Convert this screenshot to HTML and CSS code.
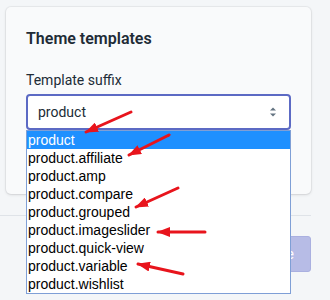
FILE: index.html
```html
<!DOCTYPE html>
<html lang="en">
<head>
  <meta charset="UTF-8">
  <meta name="viewport" content="width=device-width, initial-scale=1.0">
  <title>Theme templates</title>
  <link rel="stylesheet" href="styles.css">
</head>
<body>
  <div class="page">
    <section class="card">
      <h2 class="card-title">Theme templates</h2>
      <label class="field-label" for="suffix">Template suffix</label>
      <div class="select-wrap">
        <div class="select" id="suffix">
          <span>product</span>
          <svg class="select-arrows" width="8" height="10" viewBox="0 0 8 10">
            <path d="M4 0.5 L7 3.5 H1 Z" fill="#637381"/>
            <path d="M4 9.5 L7 6.5 H1 Z" fill="#637381"/>
          </svg>
        </div>
        <!-- open native list -->
        <ul class="options">
          <li class="selected">product</li>
          <li>product.affiliate</li>
          <li>product.amp</li>
          <li>product.compare</li>
          <li>product.grouped</li>
          <li>product.imageslider</li>
          <li>product.quick-view</li>
          <li>product.variable</li>
          <li>product.wishlist</li>
        </ul>
      </div>
    </section>

    <div class="page-actions">
      <button class="btn-save" disabled>Save</button>
    </div>

    <!-- red arrows drawn over the screenshot -->
    <svg class="annotations" width="330" height="300" viewBox="0 0 330 300">
      <defs>
        <marker id="head" markerWidth="14" markerHeight="10" refX="12" refY="5" orient="auto" markerUnits="userSpaceOnUse">
          <path d="M0 0 L13 5 L0 10 Z" fill="#e8141c"/>
        </marker>
      </defs>
      <g stroke="#e8141c" stroke-width="3" stroke-linecap="round" marker-end="url(#head)">
        <line x1="131" y1="112" x2="86" y2="132"/>
        <line x1="169" y1="135" x2="129" y2="155"/>
        <line x1="178" y1="188" x2="136" y2="207"/>
        <line x1="205" y1="232" x2="158" y2="232"/>
        <line x1="183" y1="274" x2="138" y2="264"/>
      </g>
    </svg>
  </div>
</body>
</html>
```

FILE: styles.css
```css
body {
  margin: 0;
  min-height: 300px;
  background-color: #f4f6f8;
  font-family: Roboto, "Liberation Sans", Arial, sans-serif;
  color: #212b36;
}
.page {
  position: relative;
  width: 311px;
  min-height: 293px;
  padding-top: 7px;
}
.card {
  margin-left: 6px;
  padding: 20px 20px 64px;
  background-color: #f9fafb;
  border-radius: 5px;
  box-shadow: 0 0 0 1px rgba(63, 63, 68, 0.06), 0 1px 3px 0 rgba(63, 63, 68, 0.15);
}
.card-title {
  margin: 0 0 19px;
  font-size: 16px;
  font-weight: 600;
  line-height: 24px;
}
.field-label {
  display: block;
  margin-bottom: 4px;
  font-size: 14px;
  line-height: 20px;
}
.select-wrap {
  position: relative;
}
.select {
  display: flex;
  align-items: center;
  justify-content: space-between;
  box-sizing: border-box;
  height: 36px;
  padding: 0 12px 0 10px;
  background-color: #fff;
  border: 2px solid #5c6ac4;
  border-radius: 4px;
  font-size: 14px;
}
.options {
  position: absolute;
  top: 100%;
  left: 0;
  right: 0;
  z-index: 2;
  margin: 0;
  padding: 0;
  list-style: none;
  background-color: #fff;
  border: 1px solid #7f9fd6;
  font-family: "Liberation Sans", Arial, sans-serif;
  font-size: 14px;
  line-height: 18px;
  color: #000;
}
.options li {
  padding: 0 1px;
}
.options .selected {
  background-color: #1e90ff;
  color: #fff;
}
.page-actions {
  display: flex;
  justify-content: flex-end;
  margin-top: 21px;
  padding-top: 20px;
  border-top: 1px solid #dfe3e8;
}
.btn-save {
  height: 36px;
  padding: 0 16px;
  background-color: #b7bce6;
  border: 1px solid #aab0e0;
  border-radius: 3px;
  color: #fff;
  font-family: inherit;
  font-size: 14px;
}
.annotations {
  position: absolute;
  top: 0;
  left: 0;
  z-index: 3;
  pointer-events: none;
}
```
